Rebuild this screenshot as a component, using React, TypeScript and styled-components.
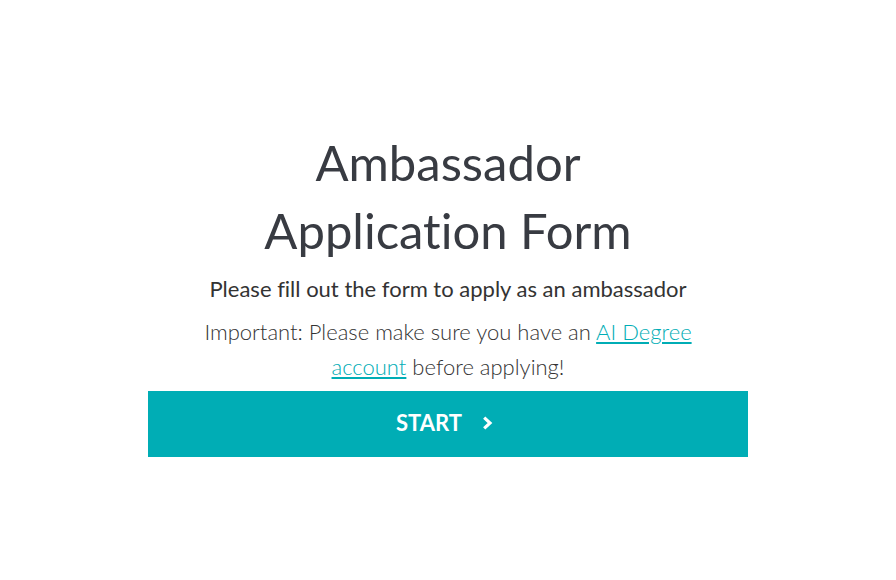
import React from "react";
import styled, { createGlobalStyle } from "styled-components";

const Global = createGlobalStyle`
  html, body { margin: 0; padding: 0; background: #ffffff; }
  body { font-family: Lato, "Open Sans", sans-serif; font-variant-ligatures: none; }
`;

const Page = styled.main`
  width: 896px;
  height: 580px;
  display: flex;
  justify-content: center;
  box-sizing: border-box;
  padding-top: 128px;
`;

const Card = styled.section`
  width: 600px;
  display: flex;
  flex-direction: column;
  align-items: center;
  text-align: center;
`;

const Title = styled.h1`
  margin: 0;
  font-family: Lato, sans-serif;
  font-weight: 400;
  font-size: 49px;
  line-height: 68px;
  color: #383b42;
  font-variant-ligatures: none;
`;

const Subtitle = styled.h2`
  margin: 9px 0 0;
  font-family: Lato, sans-serif;
  font-weight: 400;
  font-size: 22px;
  line-height: 32px;
  color: #333333;
`;

const Note = styled.p`
  margin: 9px 0 0;
  max-width: 500px;
  font-family: Lato, sans-serif;
  font-weight: 300;
  font-size: 22px;
  line-height: 35px;
  color: #333333;
`;

const Link = styled.a`
  color: #00adb5;
  text-decoration: underline;
`;

const StartButton = styled.button`
  margin-top: 7px;
  width: 600px;
  height: 66px;
  border: none;
  background: #00adb5;
  color: #ffffff;
  display: flex;
  align-items: center;
  justify-content: center;
  gap: 20px;
  font-family: Lato, sans-serif;
  font-weight: 700;
  font-size: 22px;
  cursor: pointer;
  padding: 0 7px 3px 0;
`;

const Chevron = () => (
  <svg width="11" height="14" viewBox="0 0 11 14" fill="none">
    <path d="M2.2 1.6 L8 7 L2.2 12.4" stroke="#ffffff" strokeWidth="3.2" strokeLinecap="butt" strokeLinejoin="miter" />
  </svg>
);

export default function App() {
  return (
    <>
      <Global />
      <Page>
        <Card>
          <Title>
            Ambassador
            <br />
            Application Form
          </Title>
          <Subtitle>Please fill out the form to apply as an ambassador</Subtitle>
          <Note>
            Important: Please make sure you have an <Link href="#">AI Degree account</Link> before applying!
          </Note>
          <StartButton>
            START
            <Chevron />
          </StartButton>
        </Card>
      </Page>
    </>
  );
}
